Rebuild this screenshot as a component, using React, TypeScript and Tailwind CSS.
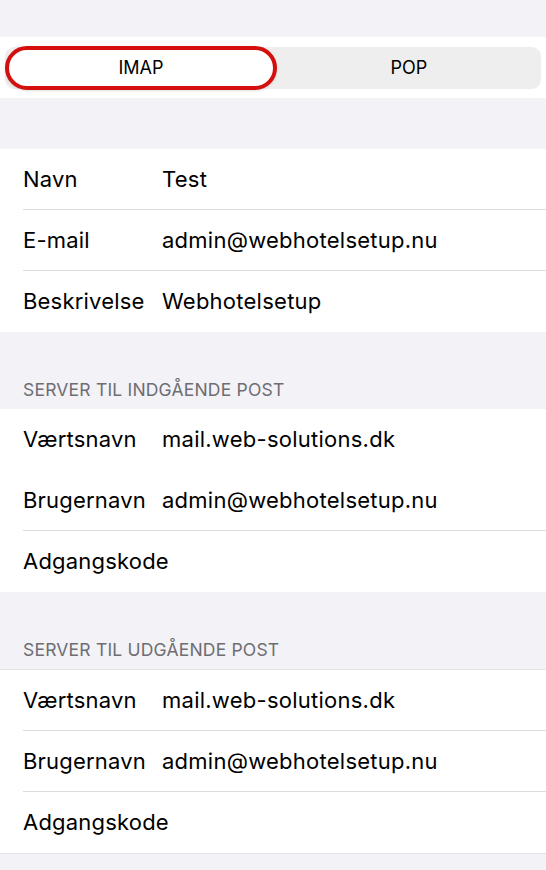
import React from "react";

interface Row {
    label: string;
    value?: string;
    line?: boolean;
}

const account: Row[] = [
    { label: "Navn", value: "Test", line: true },
    { label: "E-mail", value: "admin@webhotelsetup.nu", line: true },
    { label: "Beskrivelse", value: "Webhotelsetup" },
];

const incoming: Row[] = [
    { label: "Værtsnavn", value: "mail.web-solutions.dk" },
    { label: "Brugernavn", value: "admin@webhotelsetup.nu", line: true },
    { label: "Adgangskode" },
];

const outgoing: Row[] = [
    { label: "Værtsnavn", value: "mail.web-solutions.dk", line: true },
    { label: "Brugernavn", value: "admin@webhotelsetup.nu", line: true },
    { label: "Adgangskode" },
];

const Group: React.FC<{ rows: Row[]; bordered?: boolean }> = ({ rows, bordered }) => {
    return (
        <div className={`bg-white ${bordered ? "border-y border-[#e3e3e8]" : ""}`}>
            {rows.map((row, i) => (
                <div key={i} className="pl-[23px]">
                    <div className={`flex items-center h-[61px] ${row.line ? "border-b border-[#dcdcdf]" : ""}`}>
                        <span className="w-[139px] shrink-0 text-[22px] tracking-[0.2px] text-black">{row.label}</span>
                        {row.value && <span className="text-[22px] tracking-[0.25px] text-black">{row.value}</span>}
                    </div>
                </div>
            ))}
        </div>
    );
};

const Header: React.FC<{ title: string }> = ({ title }) => (
    <div className="h-[77px] flex items-end pl-[23px] pb-[6px]">
        <span className="text-[17.5px] tracking-[0.2px] text-[#6d6d72] uppercase">{title}</span>
    </div>
);

export default function App() {
    return (
        <div className="w-[546px] h-[870px] bg-[#f2f2f7] overflow-hidden" style={{ fontFamily: "Inter, 'Liberation Sans', sans-serif" }}>
            <div className="h-[37px]" />
            <div className="bg-white h-[61px] flex items-center px-[5px]">
                <div className="flex w-full h-[42px] rounded-[9px] bg-[#eeeeef]">
                    <div className="flex-1 flex items-center justify-center rounded-full border-[4px] border-[#d4100f] bg-white -my-[1px] shadow-sm">
                        <span className="text-[18px] font-normal text-black">IMAP</span>
                    </div>
                    <div className="flex-1 flex items-center justify-center">
                        <span className="text-[18px] font-normal text-black">POP</span>
                    </div>
                </div>
            </div>
            <div className="h-[51px]" />
            <Group rows={account} />
            <Header title="Server til indgående post" />
            <Group rows={incoming} />
            <Header title="Server til udgående post" />
            <Group rows={outgoing} bordered />
        </div>
    );
}
